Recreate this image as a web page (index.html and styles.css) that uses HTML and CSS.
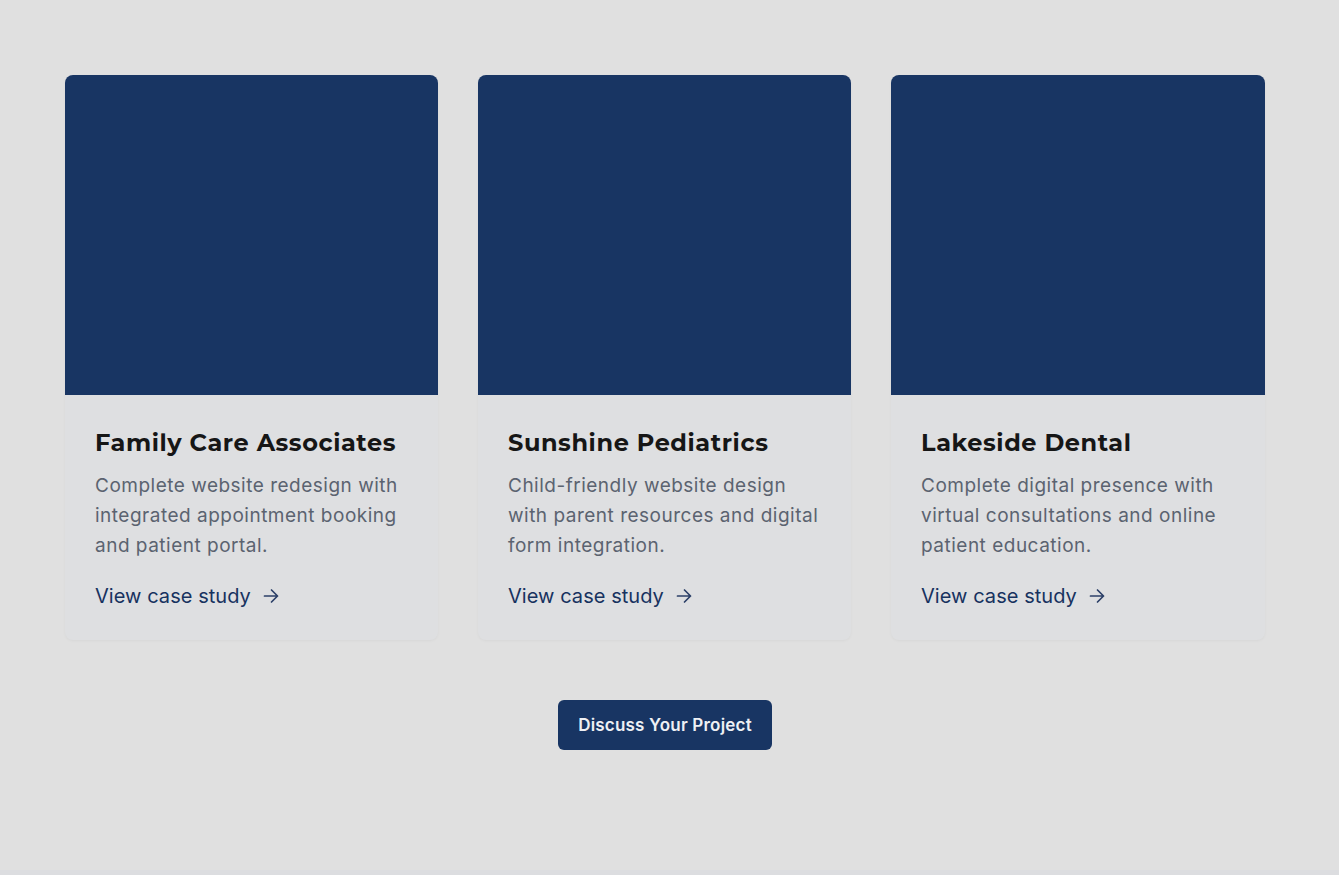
FILE: index.html
```html
<!DOCTYPE html>
<html lang="en">
<head>
<meta charset="utf-8">
<title>Case studies</title>
<link rel="stylesheet" href="styles.css">
</head>
<body>
<section class="work">
  <div class="grid">
    <article class="card">
      <div class="thumb"></div>
      <div class="body">
        <h3 class="title">Family Care Associates</h3>
        <p class="desc">Complete website redesign with integrated appointment booking and patient portal.</p>
        <a class="link" href="#">View case study <svg class="arrow" viewBox="0 0 18 18" width="18" height="18"><path d="M2.5 9h13M9.5 3l6 6-6 6" fill="none" stroke="currentColor" stroke-width="1.7" stroke-linecap="round" stroke-linejoin="round"/></svg></a>
      </div>
    </article>
    <article class="card">
      <div class="thumb"></div>
      <div class="body">
        <h3 class="title">Sunshine Pediatrics</h3>
        <p class="desc">Child-friendly website design with parent resources and digital form integration.</p>
        <a class="link" href="#">View case study <svg class="arrow" viewBox="0 0 18 18" width="18" height="18"><path d="M2.5 9h13M9.5 3l6 6-6 6" fill="none" stroke="currentColor" stroke-width="1.7" stroke-linecap="round" stroke-linejoin="round"/></svg></a>
      </div>
    </article>
    <article class="card">
      <div class="thumb"></div>
      <div class="body">
        <h3 class="title">Lakeside Dental</h3>
        <p class="desc">Complete digital presence with virtual consultations and online patient education.</p>
        <a class="link" href="#">View case study <svg class="arrow" viewBox="0 0 18 18" width="18" height="18"><path d="M2.5 9h13M9.5 3l6 6-6 6" fill="none" stroke="currentColor" stroke-width="1.7" stroke-linecap="round" stroke-linejoin="round"/></svg></a>
      </div>
    </article>
  </div>
  <div class="cta">
    <a class="btn" href="#">Discuss Your Project</a>
  </div>
</section>
<div class="next"></div>
</body>
</html>
```
FILE: styles.css
```css
* { box-sizing: border-box; }
html, body { margin: 0; padding: 0; }
body {
  background: #e0e0e0;
  font-family: Inter, "Liberation Sans", sans-serif;
}
.work {
  height: 870px;
  padding: 75px 74px 0 65px;
}
.grid {
  display: grid;
  grid-template-columns: 373px 373px 374px;
  gap: 40px;
}
.card {
  background: #dedfe1;
  border-radius: 8px;
  overflow: hidden;
  box-shadow: 0 1px 3px rgba(0,0,0,0.04);
}
.thumb {
  height: 320px;
  background: #183563;
}
.body {
  padding: 31px 28px 30px 30px;
  height: 245px;
}
.title {
  margin: 0;
  font-family: Montserrat, Inter, "Liberation Sans", sans-serif;
  font-weight: 700;
  font-size: 24px;
  line-height: 34px;
  color: #161616;
  letter-spacing: 0.58px;
}
.desc {
  margin: 11px 0 0 0;
  font-size: 19px;
  line-height: 30px;
  letter-spacing: 0.5px;
  color: #5b6370;
}
.link {
  display: inline-flex;
  align-items: center;
  gap: 11px;
  margin-top: 21px;
  font-size: 20px;
  line-height: 28px;
  letter-spacing: 0.05px;
  color: #17325f;
  text-decoration: none;
}
.arrow { color: #2c4068; }
.cta {
  display: flex;
  justify-content: center;
  margin-top: 60px;
}
.btn {
  display: inline-block;
  background: #183563;
  color: #eef0f4;
  font-weight: 600;
  font-size: 17px;
  letter-spacing: 0.2px;
  line-height: 49px;
  height: 50px;
  padding: 1px 20px 0 20px;
  border-radius: 6px;
  text-decoration: none;
}
.next {
  height: 5px;
  background: #dcdde0;
}
```
